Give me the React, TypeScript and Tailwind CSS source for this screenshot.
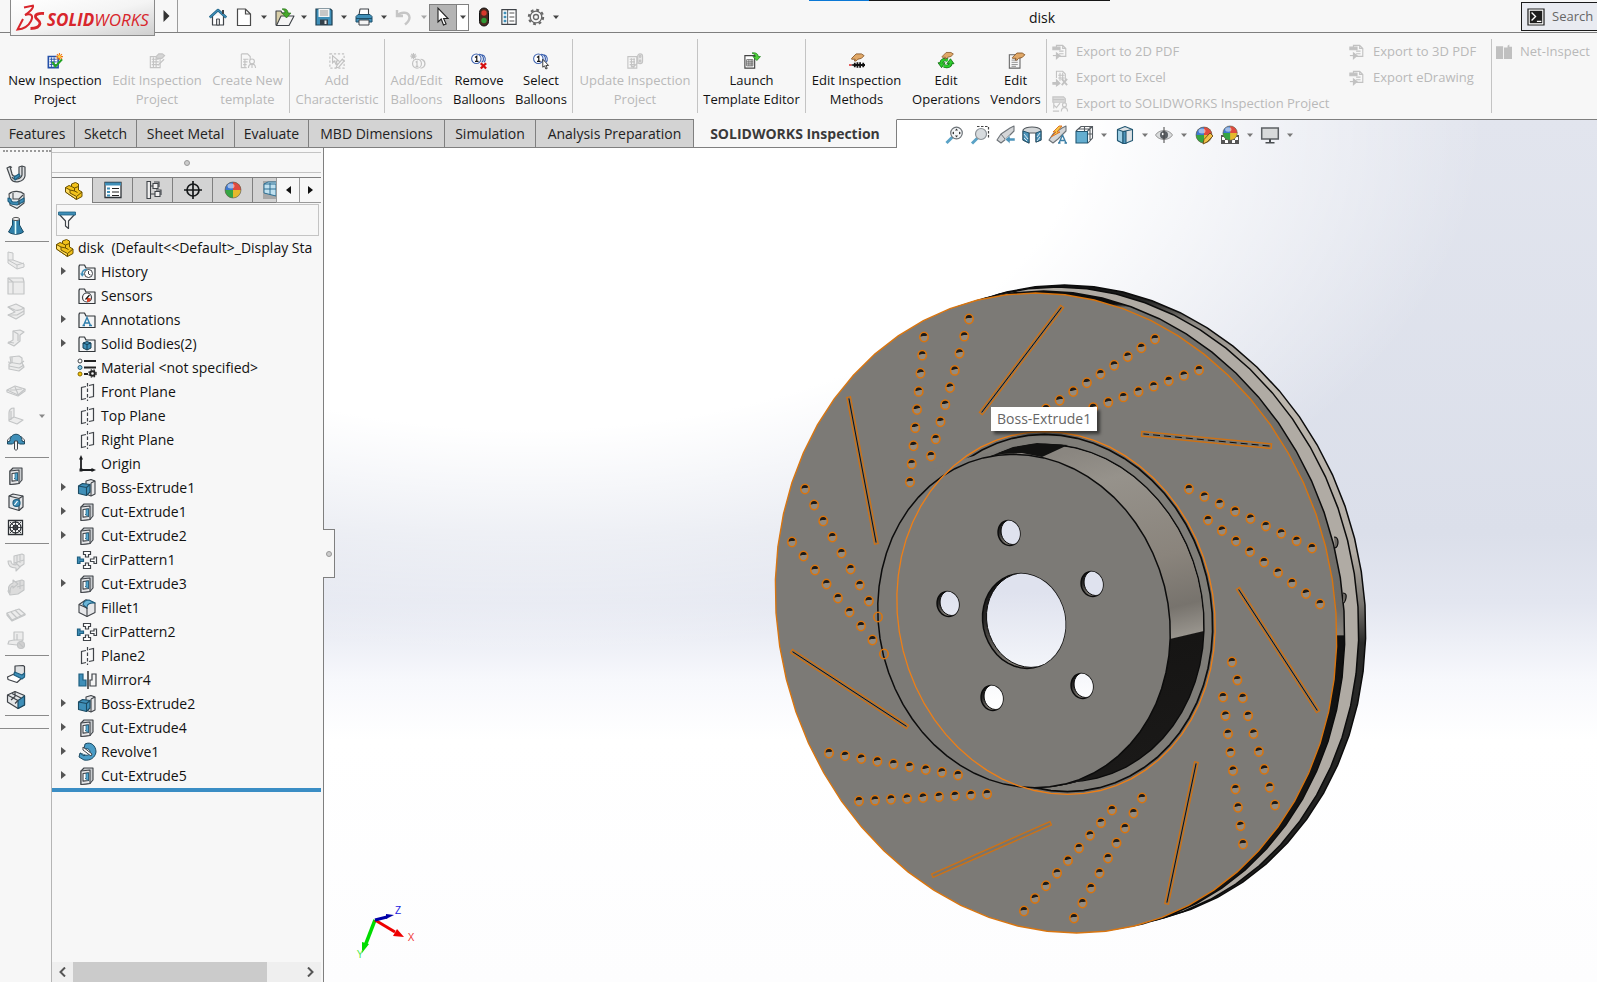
import type { ReactNode } from "react";
import clsx from "clsx";

/* ---------- ICONS ---------- */

const INK = "#3f4348";
const BLUE = "#3f8fb8";
const SKY = "#8fc8e2";
const PALE = "#e6e7e9";

const cutExtrude = (
  <g stroke={INK} strokeWidth="1.1" strokeLinejoin="round">
    <path d="M3 4l3-3h9v12l-3 3.5-9 1z" fill="#c9cccf" />
    <path d="M3 4l9-1v13.5l-9 1z" fill={PALE} />
    <path d="M5 6.500l5.500-.6v7.600l-5.500.6z" fill="#fff" />
    <path d="M8 6.300l2.500-.3v7.400L7 11.500h1z" fill="#58a9d0" stroke="#1f5f80" strokeWidth=".7" />
  </g>
);

const folder = (
  <path
    d="M1 3.500V16.500H17V5H8L6.500 2H1.500z"
    fill="#f3f4f5"
    stroke="#33373b"
    strokeWidth="1.200"
    strokeLinejoin="round"
  />
);

const plane = (
  <g stroke={INK} strokeWidth="1.200" fill="none">
    <path d="M8 3.500L3.500 4.500V16.500L8 15.500M11 2.500L15.500 1.500V13.500L11 14.500" />
    <path d="M9.500 0V18" strokeDasharray="3.500 2" />
  </g>
);

const part = (
  <g stroke="#6b5000" strokeWidth="1" strokeLinejoin="round">
    <path d="M.500 5.500L4 3.500l2.500 1V2l4-1.500 3 1.500v6l3.500 2v4.500L11.500 17.500.500 10z" fill="#f2c21a" />
    <path d="M.500 5.500L5 8v3l6.500 3.500v3L.500 10z" fill="#ffdc5e" />
    <path d="M6.500 4.500L9.500 6l4-1.500M9.500 6v3L5 8M11.500 14.500L17 10M9.500 9l3 1.500" fill="none" />
  </g>
);

const cirPattern = (
  <g stroke={INK} strokeWidth="1.200" fill="#fff">
    <path d="M5.500 .500h7v3h-2v2.500h-3V3.500h-2zM5.500 17.500h7v-3h-2v-2.500h-3v2.500h-2z" />
    <path d="M18.500 6v6.500h-2.500v-2h-3.500V8h3.500V6z" />
    <path d="M-.500 6v6.500h2.500v-2h3.500V8H2V6z" fill={BLUE} stroke="#1f5f80" />
  </g>
);

const bossExtrude = (
  <g stroke={INK} strokeWidth="1.100" strokeLinejoin="round">
    <path d="M8 2l5-1.500 4 1.500v13l-4 2-5-2z" fill={PALE} />
    <path d="M13 4l4-2M13 4v13" fill="none" />
    <path d="M.500 7L4.500 4.500 12 5.500v7.500l-3.500 3.500-8-2z" fill={BLUE} stroke="#1c4a62" />
    <path d="M.500 7l8 1.500 3.500-3M8.500 8.500v8" fill="none" stroke="#1c4a62" />
  </g>
);

const ball = (
  <g>
    <circle cx="9" cy="9" r="8" fill="#e5b92c" />
    <path d="M9 9V1a8 8 0 0 1 8 8z" fill="#e04a3f" />
    <path d="M9 9H1a8 8 0 0 1 8-8z" fill="#3e78d0" />
    <path d="M9 9H1a8 8 0 0 0 8 8z" fill="#35a544" />
    <circle cx="9" cy="9" r="8" fill="none" stroke="#555" strokeWidth=".600" />
    <ellipse cx="7" cy="5" rx="3.500" ry="2.500" fill="#fff" opacity=".5" />
  </g>
);

const exportDoc = (
  <g stroke="#c2c2c2" strokeWidth="1.300" fill="none">
    <path d="M5 4V1.500h7l3.500 3.500v9H8M12 1.500V5h3.500M8 8h5M8 11h5" />
    <path d="M1 3.500h8v3H1z" fill="#c2c2c2" />
    <path d="M1 13h4" />
    <path d="M5 10l4 3-4 3.500z" fill="#c2c2c2" />
  </g>
);

const hand = (
  <path
    d="M3 6l5-5h6l3 2-3 3-4 1-2 2H6l1-2H3z"
    fill="#e0a868"
    stroke="#7b4a1a"
    strokeWidth=".900"
  />
);

const balloons = (
  <g fill="none" stroke="#3d62b0" strokeWidth="1.200">
    <path d="M9 1.500a5 5 0 0 1 3 9M12.500 2a5 5 0 0 1 2 8.500" />
    <circle cx="6" cy="6.500" r="5.300" fill="#fff" />
    <path d="M4.500 5l2-1.500V9.500M4.500 9.500h4" stroke="#111" strokeWidth="1.300" />
  </g>
);

const glyphs: Record<string, ReactNode> = {
  part,
  plane,
  cutExtrude,
  cirPattern,
  bossExtrude,
  ball,
  exportDoc,
  history: (
    <>
      {folder}
      <circle cx="10.500" cy="10.500" r="4" fill="#fff" stroke={INK} />
      <path d="M10.500 8v3l2 1" fill="none" stroke={INK} />
      <path d="M4 11.500c0-3 2-5 5-5" fill="none" stroke={BLUE} strokeWidth="1.600" />
      <path d="M2 10.500h4.500l-2.200 3.200z" fill={BLUE} />
    </>
  ),
  sensors: (
    <>
      {folder}
      <circle cx="9" cy="10.500" r="4.500" fill="#fff" stroke={INK} strokeWidth="1.200" />
      <path d="M9 10.500l4 1a4 4 0 0 1-4 3.500z" fill="#e0452c" />
      <path d="M7.500 12.500l4-4.500" stroke="#111" strokeWidth="1.200" />
    </>
  ),
  annotations: (
    <>
      {folder}
      <path
        d="M5.500 14.500L9 6.500l3.500 8M7 12h4M4.500 14.500h2.500M11 14.500h3"
        fill="none"
        stroke="#2f7fae"
        strokeWidth="1.400"
      />
    </>
  ),
  solidBodies: (
    <>
      {folder}
      <path d="M5 8l4-1.500L13 8v5l-4 2-4-2z" fill={BLUE} stroke="#163f55" />
      <path d="M5 8l4 1.500L13 8M9 9.500V15" fill="none" stroke="#163f55" />
    </>
  ),
  material: (
    <g strokeWidth="1">
      <circle cx="2" cy="2" r="2" fill="#fff" stroke={INK} />
      <circle cx="2" cy="8.500" r="2" fill={SKY} stroke="#1f5f80" />
      <circle cx="2" cy="15" r="2" fill="#f3c200" stroke="#8a6a00" />
      <path d="M6 2h12M6 8.500h12M6 15h4" stroke="#222" strokeWidth="1.800" />
      <circle cx="14.500" cy="14.500" r="2.300" fill="none" stroke="#222" strokeWidth="2" />
      <circle cx="14.500" cy="14.500" r="3.700" fill="none" stroke="#222" strokeWidth="1.200" strokeDasharray="1.500 1.500" />
    </g>
  ),
  origin: (
    <g stroke="#1d1f21" strokeWidth="1.800" fill="none">
      <path d="M3 3v12h12" />
      <path d="M3 0l2 4.500H1zM18 15l-4.500 2v-4z" fill="#1d1f21" stroke="none" />
      <path d="M1.500 13.500h3v3h-3z" fill="#1d1f21" stroke="none" />
    </g>
  ),
  fillet: (
    <g stroke={INK} strokeWidth="1.100" strokeLinejoin="round">
      <path d="M1 5.500L8 .800l9 3.200v9.500l-8 4-8-4z" fill={PALE} />
      <path d="M9 9.500V8c0-3 3-4.500 8-4L11 1C7 1 5.500 3 5 5.500z" fill="#6cb6d8" stroke="#1f5f80" />
      <path d="M1 5.500l8 3.500v8.500" fill="none" />
    </g>
  ),
  mirror: (
    <g strokeWidth="1.200">
      <path d="M1 3h4v6h3v6H1z" fill={BLUE} stroke="#1f5f80" />
      <path d="M18 3h-4v6h-2v6h6z" fill="#f4f4f4" stroke={INK} />
      <path d="M10 0v18" stroke="#222" strokeWidth="1.400" />
    </g>
  ),
  revolve: (
    <g stroke="#1c4a62" strokeWidth="1" strokeLinejoin="round">
      <path d="M7 1c6-3 11 2 11 8-1 6-6 9-12 8l-5-3 1-4 5 2c3 1 5-1 5-3 0-3-3-4-6-3z" fill="#4a9cc6" />
      <path d="M5 4l9 7-1 2-8-6z" fill="#fff" stroke={INK} />
      <path d="M2 10l4 3 1-1" fill={SKY} />
    </g>
  ),
  /* panel tabs */
  propertyTab: (
    <g>
      <path d="M1 1.500h16v15H1z" fill="#fff" stroke="#2e3338" strokeWidth="1.300" />
      <path d="M1 1.500h16v3H1z" fill={BLUE} />
      <path d="M3 6.500h3v2H3zM3 10h3v2H3zM3 13.500h3v2H3z" fill={BLUE} />
      <path d="M8 7.500h7M8 11h7M8 14.500h7" stroke="#222" strokeWidth="1.200" />
    </g>
  ),
  configTab: (
    <g stroke={INK} strokeWidth="1.100" fill="#f0f0f0">
      <path d="M3 .500h3.500v17H3zM9 2.500h5v5H9zM11 10.500h5v5h-5zM6.500 5H9M6.500 13h4.500" />
      <path d="M10 1h5v5M12 9h5v5" fill="none" />
    </g>
  ),
  dimTab: (
    <g stroke="#16181a" strokeWidth="1.700" fill="none">
      <circle cx="9" cy="9" r="6" />
      <path d="M9 0v18M0 9h18" />
    </g>
  ),
  camTab: (
    <g stroke="#2e6f92" strokeWidth="1">
      <path d="M0 0h18v18H0z" fill="#a7a7a7" stroke="none" />
      <path d="M1 3l4-2h12v10l-4 4-12-3z" fill="#bfe0ef" />
      <path d="M1 3h12v12M13 3l4-2M7 2v12M1 8h16" fill="none" />
    </g>
  ),
  filter: (
    <g strokeLinejoin="round">
      <path d="M1 3h16l-6.500 7v7.500L7.500 15v-5z" fill="#fff" stroke={INK} strokeWidth="1.200" />
      <path d="M.500 1h17v3H.500z" fill={BLUE} stroke="#1f5f80" strokeWidth=".8" />
    </g>
  ),
  /* quick access */
  home: (
    <g strokeLinejoin="round">
      <path d="M3.500 8v9h11V8" fill="#fff" stroke={INK} strokeWidth="1.200" />
      <path d="M.800 9.500L9 2l8.200 7.500" fill="none" stroke="#1f5f80" strokeWidth="2.600" />
      <path d="M.800 9.500L9 2l8.200 7.500" fill="none" stroke={BLUE} strokeWidth="1.200" />
      <path d="M13 2h2v4h-2z" fill={INK} />
      <path d="M7.500 11h3v6h-3z" fill="#d6d6d6" stroke={INK} strokeWidth=".900" />
    </g>
  ),
  newDoc: (
    <path d="M2.500 1h8l5 5v11.500h-13zM10.500 1v5h5" fill="#fff" stroke="#4a4a4a" strokeWidth="1.200" />
  ),
  open: (
    <g strokeLinejoin="round">
      <path d="M1 3h5l1 2h6v12H1z" fill="#d9cfa8" stroke={INK} strokeWidth="1.100" />
      <path d="M6 8h13l-5 9.500H1.500z" fill="#f4f4f4" stroke={INK} strokeWidth="1.100" />
      <path d="M7 1c4-1 6 1 6 4h3l-4.500 5L7 5h3c0-2-1-3-3-4z" fill="#46a82a" stroke="#1f6a10" strokeWidth=".600" />
    </g>
  ),
  save: (
    <g>
      <path d="M1 1h14.500L17 2.500V17H1z" fill={BLUE} stroke="#1d3e50" strokeWidth="1.200" />
      <path d="M3.500 1h11v8h-11z" fill="#f4f4f4" />
      <path d="M5 3h8M5 5h8M5 7h8" stroke="#999" />
      <path d="M5 11.500h8V17H5z" fill="#33414b" />
      <path d="M9.500 12.500h2V16h-2z" fill="#e8e8e8" />
    </g>
  ),
  print: (
    <g strokeLinejoin="round">
      <path d="M5 1h8.500v6H4z" fill="#fff" stroke={INK} strokeWidth="1.100" />
      <path d="M1 8.500L3 6.500h12l2 2V14H1z" fill={BLUE} stroke="#1d4f6a" />
      <path d="M4 12h10v5H4z" fill="#f4f4f4" stroke={INK} />
      <path d="M1 10.500h16" stroke="#1d4f6a" />
    </g>
  ),
  undo: (
    <path d="M2 2v6h6M2.500 7.500C6 3.500 14 3.500 14.500 9.500c0 3-2 5-4.500 7" fill="none" stroke="#c6c6c6" strokeWidth="2.400" />
  ),
  cursor: (
    <path d="M4 0v14l3.200-3 2.300 6 2.600-1-2.500-5.500H14z" fill="#fff" stroke="#222" strokeWidth="1.100" />
  ),
  traffic: (
    <g>
      <rect x="4.500" y="0" width="9" height="18" rx="4.500" fill="#4a2b20" stroke="#111" />
      <circle cx="9" cy="5" r="2.700" fill="#d8392b" />
      <circle cx="9" cy="12.500" r="2.700" fill="#2f9a35" />
    </g>
  ),
  options: (
    <g>
      <path d="M1 .700h16v16.600H1z" fill="#fff" stroke={INK} strokeWidth="1.300" />
      <path d="M7.500 .700v16.600" stroke={INK} />
      <path d="M3 3h3v3H3zM3 7.500h3v3H3zM3 12h3v3H3z" fill={BLUE} />
      <path d="M9.500 4.500H15M9.500 9H15M9.500 13.500H15" stroke="#555" strokeWidth="1.300" />
    </g>
  ),
  gear: (
    <g fill="none" stroke="#666">
      <circle cx="9" cy="9" r="7.200" strokeWidth="2" strokeDasharray="2.830 2.830" />
      <circle cx="9" cy="9" r="5.800" strokeWidth="1.300" />
      <circle cx="9" cy="9" r="2.500" strokeWidth="1.300" />
    </g>
  ),
  prompt: (
    <g>
      <path d="M0 0h18v18H0z" fill="#fff" stroke="#222" strokeWidth="1.400" />
      <path d="M2 2h14v14H2z" fill="#1e1e1e" />
      <path d="M4 4l4.500 4.500L4 13M10 14h5" fill="none" stroke="#fff" strokeWidth="1.500" />
    </g>
  ),
  /* ribbon */
  newInspection: (
    <g>
      <path d="M1.500 4h11v12.500h-11z" fill="#fff" stroke="#2450a8" strokeWidth="1.800" />
      <path d="M3 7h8M3 10h8M3 13h8M5 5v11M8 5v11" stroke="#2450a8" strokeWidth="1" />
      <path d="M6 10l3.500 5L17 7" fill="none" stroke="#22a322" strokeWidth="2.200" />
      <path d="M14 0v8M10 4h8M11.200 1.200l5.600 5.600M16.800 1.200l-5.600 5.600" stroke="#f07818" strokeWidth="1.300" />
      <circle cx="14" cy="4" r="1.700" fill="#ffd23a" />
    </g>
  ),
  editInspection: (
    <g fill="none" stroke="#c4c4c4" strokeWidth="1.300">
      <path d="M1.500 4h11v12.500h-11zM3 7h8M3 10h8M3 13h8M5 5v11M8 5v11" />
      <path d="M8 4l3-3h4l2.500 2-3 3H9zM10 14l7-7" fill="#d5d5d5" />
    </g>
  ),
  createTemplate: (
    <g fill="none" stroke="#c4c4c4" strokeWidth="1.300">
      <path d="M1.500 1h7l3 3v4M1.500 1v15.500h6M3.500 7h6M3.500 10h5M3.500 13h4M5.500 7v9" />
      <circle cx="13.500" cy="9.500" r="2.700" />
      <path d="M9.500 17c0-3 1.500-4.500 4-4.500s4 1.500 4 4.500M13.500 12.500V17" />
    </g>
  ),
  addCharacteristic: (
    <g fill="none" stroke="#c2c2c2" strokeWidth="1.300">
      <path d="M1 1h16v16H1z" strokeDasharray="2.500 2" />
      <path d="M4 3v8l2-2 2 4 1-1-1-3h3zM9 14l6-7 2 2-6 7-3 .500z" />
    </g>
  ),
  editBalloons: (
    <g fill="none" stroke="#c2c2c2" strokeWidth="1.300">
      <path d="M5 0v7M1.500 3.500h7M2.500 1l5 5M7.500 1l-5 5M13 7a5 5 0 0 1 0 10M15 7.500a5 5 0 0 1 0 9" />
      <circle cx="9" cy="12" r="5" fill="#f7f7f7" />
      <path d="M7.500 10.500L9 9.500V15M7.500 15h3" />
    </g>
  ),
  removeBalloons: (
    <>
      {balloons}
      <path d="M11 11.500l6 6M17 11.500l-6 6" stroke="#d40f0f" strokeWidth="2.600" />
    </>
  ),
  selectBalloons: (
    <>
      {balloons}
      <path d="M11 7v9l2-1.500 1.500 3.500 1.500-.700-1.500-3.300h3z" fill="#fff" stroke="#111" strokeWidth=".900" />
    </>
  ),
  updateInspection: (
    <g fill="none" stroke="#c4c4c4" strokeWidth="1.300">
      <path d="M1 4h10v13H1zM3 7h6M3 10h6M3 13h6M5 6v10M8 6v10M4 13l3 3 5-5" />
      <rect x="12" y="1" width="5.500" height="11" rx="2.700" fill="#e8e8e8" />
      <circle cx="14.700" cy="4" r="1" />
      <circle cx="14.700" cy="9" r="1" />
    </g>
  ),
  launchTemplate: (
    <g>
      <path d="M1 3h11v14H1z" fill="#fff" stroke="#444" strokeWidth="1.300" />
      <path d="M3 7.500h7v7H3zM3 10h7M3 12.300h7M5.500 7.500v7M8 7.500v7" fill="none" stroke="#555" strokeWidth=".900" />
      <path d="M9 0c4-1 7 1 7 4h2.500L14.500 8.500 10 4h3c0-2-2-3-4-4z" fill="#4fd03a" stroke="#157a12" strokeWidth=".800" />
    </g>
  ),
  editMethods: (
    <>
      {hand}
      <path d="M0 13.500h3" stroke="#d22" strokeWidth="1.600" />
      <path d="M3 13.500h3" stroke="#111" strokeWidth="1.600" />
      <path d="M6.500 11v5M9.500 10.500v6M12.500 10.500v6M16 11v5M5 13.500h13" stroke="#111" strokeWidth="2" />
    </>
  ),
  editOperations: (
    <>
      <path d="M3.500 11.500C4 8 7 6.500 11 8M14.500 10.500c0 4-3 5.500-8 4" fill="none" stroke="#0d6b0d" strokeWidth="4" />
      <path d="M0 11h8l-4 5.500zM18 12h-8l4-5.500z" fill="#2ecc2e" stroke="#0d6b0d" strokeWidth=".900" />
      <path d="M3.500 11.500C4 8 7 6.500 11 8M14.500 10.500c0 4-3 5.500-8 4" fill="none" stroke="#2ecc2e" strokeWidth="2.500" />
      <g transform="translate(2 -1.500) scale(.9)">{hand}</g>
    </>
  ),
  editVendors: (
    <>
      <path d="M1.500 2h12v15h-12z" fill="#f6f6f6" stroke="#666" strokeWidth="1.200" />
      <path d="M4 8h7M4 10.500h7M4 13h7M4 15h5" stroke="#888" />
      <g transform="translate(2 -1)">{hand}</g>
    </>
  ),
  exportExcel: (
    <g fill="none" stroke="#c2c2c2" strokeWidth="1.200">
      <path d="M5 9V1.500h7l3 3V13M7 6h7M7 9h7M9 3v9M12 3v9" />
      <path d="M11 10l6 7M17 10l-6 7" strokeWidth="2" />
      <path d="M1 14h4v-3l4 4-4 3v-2H1z" fill="#c2c2c2" />
    </g>
  ),
  exportProject: (
    <g fill="none" stroke="#c6c6c6" strokeWidth="1.300">
      <path d="M1 1h12l2 2v4H1z" fill="#dadada" />
      <path d="M1 4h13M2 7v7M2 10l3 3 4-5M1 17h7" />
      <circle cx="14" cy="10" r="2.200" />
      <path d="M10.500 17.500c0-3 1.500-4.500 3.500-4.500s3.500 1.500 3.500 4.500" />
    </g>
  ),
  netInspect: (
    <path d="M0 2.500h8V17H0zM9 4h4V17H9zM13 2l2-1.500V3h3v14h-5z" fill="#c0c0c0" />
  ),
  /* heads-up */
  zoomFit: (
    <g>
      <path d="M7.500 11L1.500 17" stroke="#5aa2c6" strokeWidth="3" />
      <circle cx="11.500" cy="7" r="5.800" fill="#f4f6f8" stroke="#6d7378" strokeWidth="1.200" />
      <path d="M11.500 2.500l1.500 2h-3zM11.500 11.500l1.500-2h-3zM7 7l2-1.500v3zM16 7l-2-1.500v3z" fill="#333" />
    </g>
  ),
  zoomArea: (
    <g>
      <path d="M6 .500h11.500v12" fill="none" stroke="#444" strokeDasharray="2.500 1.500" strokeWidth="1.200" />
      <path d="M6.500 12L1 17.500" stroke="#5aa2c6" strokeWidth="3" />
      <circle cx="10" cy="8" r="5.500" fill="#d7dbde" stroke="#8b9196" strokeWidth="1.200" />
    </g>
  ),
  prevView: (
    <g strokeLinejoin="round">
      <path d="M0 14l4-6 9-6 4-2v5L9 13l-5 4z" fill="#d4d6d8" stroke="#6d7378" strokeWidth="1.100" />
      <path d="M4 8l4 5" stroke="#6d7378" />
      <path d="M8 13.500l5-4v2.500h5v3h-5v2.500z" fill="#4d94ba" stroke="#fff" strokeWidth=".500" />
    </g>
  ),
  section: (
    <g strokeLinejoin="round">
      <path d="M0 4c3-4 15-4 18 0v10l-5 2V7H6v10l-6-3z" fill="#d4d7d9" stroke="#50565b" strokeWidth="1.100" />
      <path d="M0 5l6 2v10l-6-3zM18 5l-5 2v9l5-2z" fill="#4d94ba" stroke="#22536c" />
      <path d="M1 8l4 5M1 12l3 3M14 11l3-4M14 15l3-4" stroke="#fff" strokeWidth=".800" />
    </g>
  ),
  dynamicAnno: (
    <g strokeLinejoin="round">
      <path d="M0 14l4-6 9-6 4-2v5L9 13l-5 4z" fill="#d4d6d8" stroke="#6d7378" strokeWidth="1.100" />
      <path d="M10 0L4 6h3l-5 5 9-5H8l5-6z" fill="#f7c948" stroke="#d96a1b" strokeWidth=".900" />
      <path d="M10 17l3.500-8 3.500 8M11 14.500h4.500M9 17h2.500M15.500 17H18" fill="none" stroke="#3c7fa6" strokeWidth="1.400" />
    </g>
  ),
  viewOrient: (
    <g fill="none" stroke="#555b60" strokeWidth="1.100">
      <path d="M1 5l5-4.500h11.500V12L13 17M9.500 1v4M12.500 5l5-4.500M13 8h4.500M4 3h11V14M15 0v12" />
      <path d="M1 5.500h11.500V17H1z" fill="#64aed0" stroke="#235873" />
    </g>
  ),
  displayStyle: (
    <g strokeLinejoin="round" stroke="#235873" strokeWidth="1.100">
      <path d="M1.500 3.500L9 .500l7.500 3v11L9 17.500l-7.500-3z" fill="#dfe3e6" />
      <path d="M1.500 3.500L7 5.500v12l-5.500-3z" fill="#9fd0e6" />
      <path d="M7 5.500h3v12H7z" fill="#4d94ba" />
      <path d="M7 5.500L16.500 3.500" fill="none" />
    </g>
  ),
  eye: (
    <g>
      <path d="M.500 9C4 3 14 3 17.500 9 14 15 4 15 .500 9z" fill="#d9dbdc" stroke="#999" />
      <circle cx="9" cy="9" r="4" fill="#5b5f63" />
      <circle cx="8" cy="8" r="1.200" fill="#fff" />
      <path d="M9 1v16" stroke="#444" />
    </g>
  ),
  editAppearance: (
    <>
      {ball}
      <path d="M8 18l1-4.500 6-6.500 3 3-6 6z" fill="#f2c14a" stroke="#6b4a10" strokeWidth=".900" />
    </>
  ),
  scene: (
    <>
      <path d="M0 9h18v9H0z" fill="#555" />
      <path d="M1 11h3v3H1zM14 11h3v3h-3zM4 14h3v3H4zM11 14h3v3h-3z" fill="#fff" />
      <g transform="translate(1 -1) scale(.9)">{ball}</g>
    </>
  ),
  monitor: (
    <g>
      <path d="M.700 2h16.600v11H.700z" fill="#d8dadb" stroke="#5c6064" strokeWidth="1.500" />
      <path d="M8 13h2v3.500H8zM4.500 16h9v1.500h-9z" fill="#4b4f52" />
    </g>
  ),
  /* left toolbar */
  sweepU: (
    <g strokeLinejoin="round" stroke="#44494d" strokeWidth="1.200">
      <path d="M0 3l3-1.500L5 9c1 3 6 3 7 0V2l3-1 3 1v9c-1 6-11 8-14 3z" fill="#dfe1e3" />
      <path d="M15 1v9c-1 4-8 6-10 2M3 1.500l2 1" fill="none" />
      <path d="M7 12l5-3 1 2-5 4z" fill={BLUE} stroke="#1f5f80" />
    </g>
  ),
  boxCut: (
    <g strokeLinejoin="round" stroke="#44494d" strokeWidth="1.100">
      <path d="M2 3c4-4 12-3 15 0v9l-7 5.500-7-3.500z" fill="#e8eaec" />
      <path d="M1 7l3 1c0 2 1 3 2 3h4l7-4v3.500L10 14l-6-1-3-3z" fill={BLUE} stroke="#1f5f80" />
      <path d="M6 2v6h6l4-4M12 8v6" fill="none" />
    </g>
  ),
  loft: (
    <g strokeLinejoin="round">
      <path d="M5.500 2h7v6l4 7c-4 3-11 3-15 0l4-7z" fill="#2f7fa8" stroke="#194a63" />
      <ellipse cx="9" cy="2" rx="3.500" ry="1.600" fill="#eee" stroke="#555" />
      <path d="M8.500 4v13" stroke="#dff" strokeWidth="1.600" />
    </g>
  ),
  grayRib: (
    <g fill="#ececec" stroke="#c3c5c6" strokeLinejoin="round">
      <path d="M1 1l5 1v7l11 4v3l-7 2L1 12z" />
      <path d="M1 9l9 5 7-2M10 14v4M6 9l-5 0" fill="none" />
    </g>
  ),
  grayDraft: (
    <g fill="#ececec" stroke="#c3c5c6" strokeLinejoin="round" strokeWidth="1.200">
      <path d="M1 1h15l1 4v12H1z" />
      <path d="M1 5h16M6 5v12M1 1l5 4" fill="none" />
    </g>
  ),
  grayWrap: (
    <g fill="#ececec" stroke="#c3c5c6" strokeLinejoin="round" strokeWidth="1.200">
      <path d="M1 4l8-3 8 4v6l-8 5-8-4 7-3z" />
      <path d="M1 4l7 3c4 1 6 0 9-2M1 12l9 0 7-4" fill="none" />
    </g>
  ),
  grayBend: (
    <g fill="#ececec" stroke="#c3c5c6" strokeLinejoin="round" strokeWidth="1.200">
      <path d="M6 2l7-1 4 2-4 3v6l-6 5-6-3 5-3z" />
      <path d="M6 2l5 3v7M1 13l6 1" fill="none" />
    </g>
  ),
  grayStack: (
    <g fill="#ececec" stroke="#c3c5c6" strokeLinejoin="round" strokeWidth="1.200">
      <path d="M3 2l9-1 3 2v5l2 4-5 4-10-2V9l2-1z" />
      <path d="M1 7l12 2 4-3M2 11l10 2 5-3M5 2v6" fill="none" />
    </g>
  ),
  grayFlat: (
    <g fill="#ececec" stroke="#c3c5c6" strokeLinejoin="round" strokeWidth="1.200">
      <path d="M0 9l8-4 10 3-7 6z" />
      <path d="M3 9l12-1M8 6l3 7M0 9v2l11 4 7-5V8" fill="none" />
    </g>
  ),
  grayCorner: (
    <g fill="#ececec" stroke="#c3c5c6" strokeLinejoin="round" strokeWidth="1.200">
      <path d="M2 6c0-3 2-5 5-5v9l9 3-6 4-8-3z" />
      <path d="M7 10l-5 3M4 4v9" fill="none" />
    </g>
  ),
  dome: (
    <g strokeLinejoin="round">
      <path d="M.500 7l4-4 1 4-5 2zM17.500 7l-4-4-1 4 5 2z" fill="#fff" stroke={INK} strokeWidth=".900" />
      <path d="M3 8C3-1 15-1 15 8l2.500 1v2h-5c-1-2-6-2-7 0h-5V9z" fill={BLUE} stroke="#1c4a62" />
      <path d="M7.500 8h3v8L9 17.500 7.500 16z" fill="#f3f3f3" stroke={INK} />
    </g>
  ),
  boxHole: (
    <g strokeLinejoin="round" stroke={INK} strokeWidth="1.200">
      <path d="M2 3l4-2 10 2v11l-4 3.500-10-3z" fill="#e4e6e8" />
      <path d="M2 3l10 2.500v12M12 5.500L16 3" fill="none" />
      <circle cx="9.500" cy="10" r="3.500" fill={BLUE} stroke="#1f5f80" />
      <path d="M7.500 12l3-4" stroke="#fff" />
    </g>
  ),
  gridVent: (
    <g fill="none" stroke="#2c3034" strokeWidth="1.300">
      <path d="M1.500 1.500h14v14h-14z" fill="#fff" />
      <circle cx="8.500" cy="8.500" r="5.500" />
      <circle cx="8.500" cy="8.500" r="2.300" />
      <path d="M8.500 2v13M2 8.500h13M3 3l11 11M14 3L3 14" strokeWidth=".900" />
    </g>
  ),
  grayTurn: (
    <g fill="#e6e6e6" stroke="#c3c5c6" strokeLinejoin="round" strokeWidth="1.100">
      <path d="M7 3l8-2 2 1v9l-6 4-4-1z" />
      <path d="M10 2v8M13 2v8M7 10l10-3M1 8c0 5 3 7 8 7v3l4-4-4-4v2c-3 0-5-1-5-4z" />
    </g>
  ),
  grayTurn2: (
    <g fill="#dcdcdc" stroke="#c3c5c6" strokeLinejoin="round" strokeWidth="1.100">
      <path d="M7 3l8-2 2 1v9l-6 4-8 1-2-4z" />
      <path d="M13 2v8M17 6l-7 2M3 14c-3-5-1-9 3-10V1l5 4-5 4V7c-2 0-3 3-3 7z" />
    </g>
  ),
  grayPanel: (
    <g fill="#ececec" stroke="#c3c5c6" strokeLinejoin="round" strokeWidth="1.200">
      <path d="M0 8l12-4 6 5-13 6z" />
      <path d="M4 7l6 6M8 5l6 6M0 8v2l5 6 13-6V9" fill="none" />
    </g>
  ),
  grayBlock: (
    <g fill="#ececec" stroke="#c3c5c6" strokeLinejoin="round" strokeWidth="1.200">
      <path d="M7 1l9 0v8l-6 5-9-1 1-3 5-1z" />
      <path d="M7 9l9 0M10 3v6" fill="none" />
      <circle cx="14" cy="14" r="3.500" fill="#d0d0d0" />
      <path d="M12 12l4 4" />
    </g>
  ),
  hemBlue: (
    <g strokeLinejoin="round" stroke={INK} strokeWidth="1.200">
      <path d="M8 1l8-.500 1.500 1V11L15 13l-7-4z" fill="#dfe1e3" />
      <path d="M.500 12L7 9l9 3-6 5.500-9-3z" fill="#fff" />
      <path d="M7.500 7l7.500 3 2.500-2v4L15 14 7 10z" fill={BLUE} stroke="#1f5f80" />
    </g>
  ),
  boxBlue: (
    <g strokeLinejoin="round" stroke={INK} strokeWidth="1.200">
      <path d="M.500 4L8 .500l9.500 4V14L11 17.500.500 11z" fill="#e4e6e8" />
      <path d="M17.500 5v9L11 17.500V9.500z" fill={BLUE} stroke="#1c4a62" />
      <path d="M.500 4L11 9.500M5 2.500l9 4.500M8 .500v5L4 9M11 9.500l-3 3" fill="none" />
    </g>
  ),
};

const Icon = ({ name, className = "size-[18px]" }: { name: string; className?: string }) => (
  <svg viewBox="0 0 18 18" aria-hidden="true" className={clsx("shrink-0 overflow-visible", className)}>
    {glyphs[name]}
  </svg>
);

const Caret = ({ className = "text-[#444]" }: { className?: string }) => (
  <svg viewBox="0 0 6 4" aria-hidden="true" className={clsx("h-1 w-[6px] shrink-0 fill-current", className)}>
    <path d="M0 .500h6L3 4z" />
  </svg>
);

/* ---------- TITLE BAR ---------- */

const Logo = () => (
  <div className="ml-[10px] flex h-9 w-[145px] items-center border border-t-0 border-[#8a8a8a] bg-linear-to-br from-white via-[#f4f4f4] to-[#cfcfcf] pl-1">
    <svg viewBox="0 0 32 30" aria-hidden="true" className="h-[30px] w-8 shrink-0">
      <g fill="none" stroke="#d8262c">
        <path d="M9 4.500L18 2.500C19 5 14 9.500 10 12" strokeWidth="1.900" />
        <path d="M10 12c7-2 8.500 1 6 6-2.500 5-7 8-13.500 8.500L8 16" strokeWidth="2" />
        <path d="M29 10.500c-5.500-.5-9 1-8.500 3.500.5 2.500 5 3.500 4.500 6.500-.5 3-4 5-9.500 5" strokeWidth="2.800" />
      </g>
    </svg>
    <span className="pt-1 text-[17px] leading-5 text-[#d8262c] italic">
      <b className="font-bold">SOLID</b>WORKS
    </span>
  </div>
);

const quickTools: { name: string; label: string; menu?: boolean; off?: boolean }[] = [
  { name: "newDoc", label: "New", menu: true },
  { name: "open", label: "Open", menu: true },
  { name: "save", label: "Save", menu: true },
  { name: "print", label: "Print", menu: true },
  { name: "undo", label: "Undo", menu: true, off: true },
];

const TitleBar = () => (
  <header className="relative flex h-[33px] items-start border-b border-[#7f7f7f]">
    <Logo />
    <button aria-label="Show menu" className="flex h-8 w-[22px] items-center justify-center">
      <svg viewBox="0 0 6 12" className="h-3 w-[7px] fill-[#333]">
        <path d="M0 0l6 6-6 6z" />
      </svg>
    </button>
    <div className="h-8 w-px bg-[#9b9b9b]" />
    <div className="flex h-8 items-center pt-[2px] pl-[31px]">
      <button aria-label="Home" className="flex w-[26px] items-center">
        <Icon name="home" />
      </button>
      {quickTools.map((t) => (
        <button key={t.name} aria-label={t.label} className="flex w-10 items-center gap-2">
          <Icon name={t.name} />
          <Caret className={t.off ? "text-[#a8a8a8]" : "text-[#444]"} />
        </button>
      ))}
      <button aria-label="Select" className="-ml-[6px] flex h-[27px] w-10 border border-[#808080]">
        <span className="flex h-full w-[26px] items-center justify-center bg-[#b4b4b4]">
          <Icon name="cursor" />
        </span>
        <span className="flex h-full flex-1 items-center justify-center border-l border-[#808080] bg-white">
          <Caret />
        </span>
      </button>
      <button aria-label="Rebuild" className="ml-[6px] w-[26px]">
        <Icon name="traffic" />
      </button>
      <button aria-label="File properties" className="w-[26px]">
        <Icon name="options" className="size-4" />
      </button>
      <button aria-label="Options" className="flex items-center gap-2">
        <Icon name="gear" />
        <Caret />
      </button>
    </div>
    <h1 className="ml-[470px] h-8 text-sm leading-[35px] text-[#111]">disk</h1>
    <label className="mt-[2px] ml-auto flex h-[29px] w-[76px] items-center gap-2 overflow-hidden border border-r-0 border-[#1b1b1b] bg-[#e9ebf1] pl-[6px]">
      <Icon name="prompt" className="size-4" />
      <input
        aria-label="Search"
        placeholder="Search"
        className="w-11 bg-transparent text-[13px] text-[#555] outline-none placeholder:text-[#666]"
      />
    </label>
    {/* WINDOW EDGE PEEKING IN FROM ABOVE */}
    <div className="absolute top-0 left-[809px] flex h-px w-[301px]">
      <span className="w-[60px] bg-[#0a78d6]" />
      <span className="flex-1 bg-[#161616]" />
    </div>
  </header>
);

/* ---------- RIBBON ---------- */

interface RibbonButtonProps {
  icon: string;
  lines: [string, string];
  width: string;
  disabled?: boolean;
}

const RibbonButton = ({ icon, lines, width, disabled }: RibbonButtonProps) => (
  <button
    disabled={disabled}
    className={clsx(
      "flex shrink-0 flex-col items-center text-[13px] leading-[19px] whitespace-nowrap",
      width,
      disabled ? "text-[#b9b9b9]" : "text-[#111]",
    )}
  >
    <Icon name={icon} className="mb-[2px] size-4" />
    <span>{lines[0]}</span>
    <span>{lines[1]}</span>
  </button>
);

const ribbonGroups: RibbonButtonProps[][] = [
  [
    { icon: "newInspection", lines: ["New Inspection", "Project"], width: "w-[106px]" },
    { icon: "editInspection", lines: ["Edit Inspection", "Project"], width: "w-[98px]", disabled: true },
    { icon: "createTemplate", lines: ["Create New", "template"], width: "w-[83px]", disabled: true },
  ],
  [{ icon: "addCharacteristic", lines: ["Add", "Characteristic"], width: "w-[94px]", disabled: true }],
  [
    { icon: "editBalloons", lines: ["Add/Edit", "Balloons"], width: "w-[63px]", disabled: true },
    { icon: "removeBalloons", lines: ["Remove", "Balloons"], width: "w-[62px]" },
    { icon: "selectBalloons", lines: ["Select", "Balloons"], width: "w-[62px]" },
  ],
  [{ icon: "updateInspection", lines: ["Update Inspection", "Project"], width: "w-[124px]", disabled: true }],
  [{ icon: "launchTemplate", lines: ["Launch", "Template Editor"], width: "w-[107px]" }],
  [
    { icon: "editMethods", lines: ["Edit Inspection", "Methods"], width: "w-[101px]" },
    { icon: "editOperations", lines: ["Edit", "Operations"], width: "w-[78px]" },
    { icon: "editVendors", lines: ["Edit", "Vendors"], width: "w-[61px]" },
  ],
];

const exportColumns = [
  {
    width: "w-[297px]",
    items: [
      ["exportDoc", "Export to 2D PDF"],
      ["exportExcel", "Export to Excel"],
      ["exportProject", "Export to SOLIDWORKS Inspection Project"],
    ],
  },
  {
    width: "w-[139px]",
    items: [
      ["exportDoc", "Export to 3D PDF"],
      ["exportDoc", "Export eDrawing"],
    ],
  },
];

const ExportButton = ({ icon, label }: { icon: string; label: string }) => (
  <button disabled className="flex h-[26px] items-center gap-2 text-[13px] whitespace-nowrap text-[#b9b9b9]">
    <Icon name={icon} className="size-4" />
    {label}
  </button>
);

const Ribbon = () => (
  <div className="flex h-[86px] overflow-hidden py-[6px] pl-[2px]">
    {ribbonGroups.map((group, i) => (
      <div key={i} className="flex shrink-0 items-start border-r border-[#c4c4c4] pt-[14px]">
        {group.map((b) => (
          <RibbonButton key={b.lines.join(" ")} {...b} />
        ))}
      </div>
    ))}
    {exportColumns.map((col) => (
      <div key={col.width} className={clsx("shrink-0 pl-[5px]", col.width)}>
        {col.items.map(([icon, label]) => (
          <ExportButton key={label} icon={icon} label={label} />
        ))}
      </div>
    ))}
    <div className="ml-2 shrink-0 border-l border-[#c4c4c4] pl-1">
      <ExportButton icon="netInspect" label="Net-Inspect" />
    </div>
  </div>
);

/* ---------- COMMAND TABS + HEADS-UP BAR ---------- */

const commandTabs = [
  { label: "Features", width: "w-[75px]" },
  { label: "Sketch", width: "w-[62px]" },
  { label: "Sheet Metal", width: "w-[98px]" },
  { label: "Evaluate", width: "w-[74px]" },
  { label: "MBD Dimensions", width: "w-[136px]" },
  { label: "Simulation", width: "w-[91px]" },
  { label: "Analysis Preparation", width: "w-[158px]" },
  { label: "SOLIDWORKS Inspection", width: "w-[203px]", active: true },
];

const viewTools = [
  { name: "zoomFit", label: "Zoom to fit", width: "w-[26px]" },
  { name: "zoomArea", label: "Zoom to area", width: "w-[26px]" },
  { name: "prevView", label: "Previous view", width: "w-[26px]" },
  { name: "section", label: "Section view", width: "w-[26px]" },
  { name: "dynamicAnno", label: "Dynamic annotation views", width: "w-[26px]" },
  { name: "viewOrient", label: "View orientation", width: "w-[41px]", menu: true },
  { name: "displayStyle", label: "Display style", width: "w-[39px]", menu: true },
  { name: "eye", label: "Hide/show items", width: "w-10", menu: true },
  { name: "editAppearance", label: "Edit appearance", width: "w-[26px]" },
  { name: "scene", label: "Apply scene", width: "w-10", menu: true },
  { name: "monitor", label: "View settings", width: "w-10", menu: true },
];

const CommandTabs = () => (
  <div className="flex h-[29px]">
    <nav className="flex shrink-0">
      {commandTabs.map((tab) => (
        <button
          key={tab.label}
          className={clsx(
            "border-t border-r border-b border-[#7f7f7f] text-sm whitespace-nowrap",
            tab.width,
            tab.active ? "border-t-transparent bg-[#f7f7f7] font-bold text-[#3a3a3a]" : "bg-[#d3d3d3] text-[#222]",
          )}
        >
          {tab.label}
        </button>
      ))}
    </nav>
    <div className="flex flex-1 items-center border-t border-[#7f7f7f] pt-[2px] pl-12">
      {viewTools.map((t) => (
        <button key={t.name} aria-label={t.label} className={clsx("flex shrink-0 items-center gap-2", t.width)}>
          <Icon name={t.name} />
          {t.menu && <Caret className="text-[#777]" />}
        </button>
      ))}
    </div>
  </div>
);

/* ---------- LEFT TOOLBAR ---------- */

const sideGroups = [
  ["sweepU", "boxCut", "loft"],
  ["grayRib", "grayDraft", "grayWrap", "grayBend", "grayStack", "grayFlat", "grayCorner", "dome"],
  ["cutExtrude", "boxHole", "gridVent"],
  ["grayTurn", "grayTurn2", "grayPanel", "grayBlock"],
  ["hemBlue", "boxBlue"],
];

const SideToolbar = () => (
  <div className="w-[51px] shrink-0 bg-[#f7f7f7]">
    <div className="mt-[2px] mb-[9px] ml-[3px] border-t-2 border-dotted border-[#9a9a9a]" />
    {sideGroups.map((group, i) => (
      <div key={i} className="pl-[5px]">
        {group.map((name) => (
          <button key={name} aria-label={name} className="flex h-[26px] w-full items-center gap-[14px] pl-[2px]">
            <Icon name={name} />
            {name === "grayCorner" && <Caret className="text-[#888]" />}
          </button>
        ))}
        <div className="mt-[2px] mr-[2px] mb-[5px] border-t border-[#8a8a8a]" />
      </div>
    ))}
    <div className="mt-3 mr-[2px] border-t border-[#8a8a8a]" />
  </div>
);

/* ---------- FEATURE TREE ---------- */

const treeItems: { icon: string; label: string; open?: boolean }[] = [
  { icon: "history", label: "History", open: true },
  { icon: "sensors", label: "Sensors" },
  { icon: "annotations", label: "Annotations", open: true },
  { icon: "solidBodies", label: "Solid Bodies(2)", open: true },
  { icon: "material", label: "Material <not specified>" },
  { icon: "plane", label: "Front Plane" },
  { icon: "plane", label: "Top Plane" },
  { icon: "plane", label: "Right Plane" },
  { icon: "origin", label: "Origin" },
  { icon: "bossExtrude", label: "Boss-Extrude1", open: true },
  { icon: "cutExtrude", label: "Cut-Extrude1", open: true },
  { icon: "cutExtrude", label: "Cut-Extrude2", open: true },
  { icon: "cirPattern", label: "CirPattern1" },
  { icon: "cutExtrude", label: "Cut-Extrude3", open: true },
  { icon: "fillet", label: "Fillet1" },
  { icon: "cirPattern", label: "CirPattern2" },
  { icon: "plane", label: "Plane2" },
  { icon: "mirror", label: "Mirror4" },
  { icon: "bossExtrude", label: "Boss-Extrude2", open: true },
  { icon: "cutExtrude", label: "Cut-Extrude4", open: true },
  { icon: "revolve", label: "Revolve1", open: true },
  { icon: "cutExtrude", label: "Cut-Extrude5", open: true },
];

const Arrow = ({ flip = false }: { flip?: boolean }) => (
  <svg viewBox="0 0 5 8" aria-hidden="true" className={clsx("h-2 w-[5px] fill-[#111]", flip && "rotate-180")}>
    <path d="M0 0l5 4-5 4z" />
  </svg>
);

const PanelTabs = () => (
  <div className="mr-[2px] flex h-[26px] border-t border-[#7f7f7f]">
    <button aria-label="FeatureManager tree" className="flex w-10 items-center justify-center pl-[3px]">
      <Icon name="part" />
    </button>
    {["propertyTab", "configTab", "dimTab", "ball"].map((name) => (
      <button
        key={name}
        aria-label={name}
        className="flex w-10 items-center justify-center border-b border-l border-[#7f7f7f] bg-[#d3d3d3]"
      >
        <Icon name={name} />
      </button>
    ))}
    <button
      aria-label="CAM tree"
      className="flex w-6 items-center overflow-hidden border-b border-l border-[#7f7f7f] bg-[#d3d3d3] pl-[10px]"
    >
      <Icon name="camTab" />
    </button>
    <button aria-label="Scroll tabs left" className="z-10 flex w-[23px] items-center justify-center border-b border-l border-[#9a9a9a] bg-[#f7f7f7]">
      <Arrow flip />
    </button>
    <button aria-label="Scroll tabs right" className="flex flex-1 items-center justify-center border-b border-l border-[#9a9a9a] bg-[#f7f7f7]">
      <Arrow />
    </button>
  </div>
);

const FeatureTree = () => (
  <aside className="flex w-[273px] shrink-0 flex-col border-r border-l border-r-[#7f7f7f] border-l-[#b5b5b5] bg-[#f7f7f7]">
    <div className="mt-1 mr-[2px] mb-1 flex h-[21px] items-center justify-center border-t border-b border-[#c4c4c4]">
      <span className="size-[6px] rounded-full border border-[#999] bg-[#ccc]" />
    </div>
    <PanelTabs />
    <label className="mx-1 mt-px flex h-8 items-center border border-[#c4c4c4] pl-px">
      <Icon name="filter" />
      <input aria-label="Filter tree" className="ml-2 w-full bg-transparent text-sm outline-none" />
    </label>
    <div className="mr-[2px] flex h-6 items-center gap-1 pl-1 text-sm whitespace-pre text-[#111]">
      <Icon name="part" />
      <span>{"disk  (Default<<Default>_Display Sta"}</span>
    </div>
    <ul>
      {treeItems.map((item) => (
        <li key={item.label} className="flex h-6 items-center text-sm whitespace-nowrap text-[#111]">
          <span className="flex w-[26px] shrink-0 pb-[2px] pl-[9px]">
            {item.open && (
              <svg viewBox="0 0 5 8" aria-hidden="true" className="h-2 w-[5px] fill-[#555]">
                <path d="M0 0l5 4-5 4z" />
              </svg>
            )}
          </span>
          <Icon name={item.icon} />
          <span className="pl-[5px]">{item.label}</span>
        </li>
      ))}
    </ul>
    <div className="mr-[2px] h-1 bg-[#3a8dc4]" />
    {/* SCROLLBAR */}
    <div className="mt-auto mr-[2px] flex h-5 bg-[#efefef]">
      <button aria-label="Scroll left" className="flex w-[21px] items-center justify-center">
        <svg viewBox="0 0 7 10" className="h-[10px] w-[7px] fill-none stroke-[#555] stroke-2">
          <path d="M6 .500L1.500 5 6 9.500" />
        </svg>
      </button>
      <span className="w-[194px] bg-[#cbcbcb]" />
      <button aria-label="Scroll right" className="ml-auto flex w-[21px] items-center justify-center">
        <svg viewBox="0 0 7 10" className="h-[10px] w-[7px] fill-none stroke-[#555] stroke-2">
          <path d="M1 .500L5.500 5 1 9.500" />
        </svg>
      </button>
    </div>
  </aside>
);

/* ---------- BRAKE DISK ---------- */

// every circle parallel to the disk face goes through the same projection
const SCALE_X = 280;
const SHEAR = 20.5;
const SCALE_Y = 320;

const ring = (cx: number, cy: number, r: number, n = 60) =>
  Array.from({ length: n }, (_, i) => {
    const t = (i / n) * Math.PI * 2;
    const x = cx + r * (SCALE_X * Math.cos(t) + SHEAR * Math.sin(t));
    const y = cy + r * SCALE_Y * Math.sin(t);
    return `${x.toFixed(1)},${y.toFixed(1)}`;
  }).join(" ");

const CX = 1056;
const CY = 613;
const HUB_X = 1024;
const HUB_Y = 621;

// first and last hole of every drilled row, nine holes each
const drillRows = [
  [924, 337, 910, 482],
  [969, 319, 931, 456],
  [1155, 339, 1046, 409],
  [1199, 370, 1078, 413],
  [1189, 489, 1312, 548],
  [1208, 520, 1320, 604],
  [1232, 662, 1275, 805],
  [1223, 697, 1243, 844],
  [1142, 798, 1074, 918],
  [1112, 810, 1024, 911],
  [987, 794, 859, 801],
  [958, 775, 829, 753],
  [792, 542, 884, 654],
  [805, 489, 878, 617],
];

const slots = [
  [1061, 308, 982, 412],
  [849, 399, 876, 542],
  [793, 652, 906, 726],
  [934, 875, 1049, 824],
  [1167, 902, 1196, 764],
  [1317, 710, 1239, 590],
  [1269, 446, 1144, 434],
];

const boltHoles = [
  [1009, 533],
  [948, 604],
  [992, 698],
  [1082, 686],
  [1092, 584],
];

const Hole = ({ id, x, y, r, dx, dy }: { id: string; x: number; y: number; r: number; dx: number; dy: number }) => (
  <g>
    <clipPath id={id}>
      <polygon points={ring(x, y, r, 40)} />
    </clipPath>
    <polygon points={ring(x, y, r, 40)} fill="url(#wall)" stroke="#0c0c0c" strokeWidth="1.5" />
    <polygon points={ring(x + dx, y + dy, r, 40)} fill="url(#sky)" stroke="#0c0c0c" strokeWidth="1" clipPath={`url(#${id})`} />
  </g>
);

const BrakeDisk = () => (
  <svg
    viewBox="324 148 1273 834"
    preserveAspectRatio="xMinYMin meet"
    role="img"
    aria-label="Brake disk model"
    className="absolute inset-0 size-full"
  >
    <defs>
      <linearGradient id="rearSide" gradientUnits="userSpaceOnUse" x1="1200" y1="284" x2="1200" y2="925">
        <stop offset="0" stopColor="#111" />
        <stop offset=".025" stopColor="#222" />
        <stop offset=".06" stopColor="#8d8983" />
        <stop offset=".15" stopColor="#bdb7ae" />
        <stop offset=".42" stopColor="#b3ada5" />
        <stop offset=".5" stopColor="#77746f" />
        <stop offset=".56" stopColor="#2a2a29" />
        <stop offset="1" stopColor="#1c1c1b" />
      </linearGradient>
      <linearGradient id="frontSide" gradientUnits="userSpaceOnUse" x1="1200" y1="288" x2="1200" y2="930">
        <stop offset="0" stopColor="#0d0d0d" />
        <stop offset=".025" stopColor="#0d0d0d" />
        <stop offset=".03" stopColor="#73716c" />
        <stop offset=".5" stopColor="#6e6c68" />
        <stop offset=".54" stopColor="#85817b" />
        <stop offset=".542" stopColor="#111" />
        <stop offset="1" stopColor="#141414" />
      </linearGradient>
      <linearGradient id="hubSide" gradientUnits="userSpaceOnUse" x1="1100" y1="445" x2="1180" y2="785">
        <stop offset="0" stopColor="#8a8680" />
        <stop offset=".1" stopColor="#96928b" />
        <stop offset=".35" stopColor="#8a847c" />
        <stop offset=".5" stopColor="#77736d" />
        <stop offset=".585" stopColor="#98948d" />
        <stop offset=".588" stopColor="#161514" />
        <stop offset="1" stopColor="#1b1a19" />
      </linearGradient>
      <linearGradient id="wall" x1="0" y1="0" x2="0" y2="1">
        <stop offset="0" stopColor="#0f0f0f" />
        <stop offset=".5" stopColor="#2a2928" />
        <stop offset="1" stopColor="#8c8780" />
      </linearGradient>
      <linearGradient id="sky" gradientUnits="userSpaceOnUse" x1="0" y1="520" x2="0" y2="700">
        <stop offset="0" stopColor="#dfe2ee" />
        <stop offset=".4" stopColor="#dfe2ee" />
        <stop offset=".8" stopColor="#f2f4f9" />
        <stop offset="1" stopColor="#fdfdfe" />
      </linearGradient>
      <linearGradient id="drill" x1=".35" y1="0" x2=".5" y2="1">
        <stop offset=".38" stopColor="#1c1a18" />
        <stop offset=".44" stopColor="#938b80" />
      </linearGradient>
    </defs>

    {/* OUTER EDGE, BACK TO FRONT */}
    <g stroke="#0c0c0c" strokeWidth="1.5">
      <polygon points={ring(CX + 29, CY - 8, 1)} fill="url(#rearSide)" />
      <polygon points={ring(CX + 22, CY - 6, 1)} fill="#b0aba4" />
      <polygon points={ring(CX + 8, CY - 2, 1)} fill="url(#frontSide)" />
    </g>
    <path d="M1334 537q4 0 4 5t-3 6M1343 593q4 0 3 5t-3 5" fill="#6b6762" stroke="#0c0c0c" strokeWidth="1.2" />
    <polygon points={ring(CX, CY, 1)} fill="#7c7a76" stroke="#d9750f" strokeWidth="1.4" />

    {/* RECESS AND HUB */}
    <polygon points={ring(CX, CY, 0.566)} fill="#716f6b" />
    <polygon points={ring(CX, CY, 0.558)} fill="#7f7d78" stroke="#0c0c0c" strokeWidth="1.7" />
    <polygon points={ring(CX, CY, 0.527)} fill="url(#hubSide)" stroke="#0c0c0c" strokeWidth="1.5" />
    {Array.from({ length: 12 }, (_, i) => (
      <polygon key={i} points={ring(CX - (i * 32) / 12, CY + (i * 8) / 12, 0.524)} fill="url(#hubSide)" />
    ))}
    <path d="M930 470l40-13 43-10-23 9-60 30z" fill="#7c7a76" />
    <path d="M988 457l25-10 24-4 31 2-26 12-20-4-20 1z" fill="#121211" />
    <polygon points={ring(HUB_X, HUB_Y, 0.521)} fill="#7c7a76" stroke="#0c0c0c" strokeWidth="1.5" />

    <Hole id="bore" x={HUB_X} y={HUB_Y} r={0.148} dx={4} dy={-1} />
    {boltHoles.map(([x, y]) => (
      <Hole key={x} id={`bolt-${x}`} x={x} y={y} r={0.039} dx={3} dy={-1} />
    ))}

    {/* HIGHLIGHTED EDGES */}
    <polygon points={ring(CX, CY, 0.567)} fill="none" stroke="#ee7f16" strokeWidth="1.3" />
    {slots.map(([x1, y1, x2, y2], i) => (
      <g key={i} strokeLinecap="square">
        <path d={`M${x1} ${y1}L${x2} ${y2}`} stroke="#cf7214" strokeWidth={i === 6 ? 6 : 5} />
        <path d={`M${x1} ${y1}L${x2} ${y2}`} stroke="#77756f" strokeWidth={i === 6 ? 3.2 : 2.4} />
        {i !== 3 && (
          <path
            d={`M${x1} ${y1}L${x2} ${y2}`}
            stroke="#0d0d0d"
            strokeWidth="1"
            strokeDasharray={i === 6 ? "6 5" : undefined}
          />
        )}
      </g>
    ))}
    {drillRows.map(([x1, y1, x2, y2], row) =>
      Array.from({ length: 9 }, (_, i) => (
        <ellipse
          key={`${row}-${i}`}
          cx={x1 + ((x2 - x1) * i) / 8}
          cy={y1 + ((y2 - y1) * i) / 8}
          rx="4.2"
          ry="4.7"
          fill={row > 11 && i === 8 ? "none" : "url(#drill)"}
          stroke="#d9750f"
          strokeWidth="1.6"
        />
      )),
    )}
  </svg>
);

const Triad = () => (
  <svg viewBox="354 902 66 60" aria-hidden="true" className="absolute bottom-5 left-[30px] h-[60px] w-[66px]">
    <path d="M375 920l-10 26" stroke="#00dc00" strokeWidth="3.500" />
    <path d="M362 953l0-11 7 2z" fill="#00dc00" />
    <path d="M375 920l20 12" stroke="#ee0000" strokeWidth="3" />
    <path d="M404 937l-11-1 4-7z" fill="#ee0000" />
    <path d="M375 920l12-3" stroke="#0000a8" strokeWidth="3" />
    <path d="M394 915l-8 4v-5z" fill="#0000a8" />
    <g fontSize="10" fontFamily="Liberation Sans, sans-serif" textAnchor="middle">
      <text x="411" y="941" fill="#f03a3a">X</text>
      <text x="398" y="914" fill="#2020e0">Z</text>
      <text x="360" y="958" fill="#4ce84c">Y</text>
    </g>
  </svg>
);

const Viewport = () => (
  <main className="relative min-w-0 flex-1">
    <BrakeDisk />
    {/* SPLITTER HANDLE */}
    <button
      aria-label="Collapse panel"
      className="absolute top-[381px] -left-px flex h-[49px] w-3 items-center justify-center border border-l-0 border-[#7f7f7f] bg-[#f7f7f7]"
    >
      <span className="size-[6px] rounded-full border border-[#999] bg-[#ccc]" />
    </button>
    <div
      role="tooltip"
      className="absolute top-[259px] left-[667px] h-6 bg-white px-[6px] text-sm leading-[23px] whitespace-nowrap text-[#666] shadow-[3px_3px_3px_#0008]"
    >
      Boss-Extrude1
    </div>
    <Triad />
  </main>
);

export default function App() {
  return (
    <div className="flex h-screen flex-col overflow-hidden bg-[#f7f7f7] font-['Open_Sans','Noto_Sans',sans-serif]">
      <TitleBar />
      <Ribbon />
      <div className="flex min-h-0 flex-1 flex-col bg-[radial-gradient(ellipse_60%_62%_at_33%_0%,#fff_58%,#fff0_100%),linear-gradient(to_bottom,#e2e5ee_0%,#dbdfea_48%,#e3e6f0_56%,#f7f8fc_65%,#fff_72%,#fdfdfe_100%)]">
        <CommandTabs />
        <div className="flex min-h-0 flex-1">
          <SideToolbar />
          <FeatureTree />
          <Viewport />
        </div>
      </div>
    </div>
  );
}
